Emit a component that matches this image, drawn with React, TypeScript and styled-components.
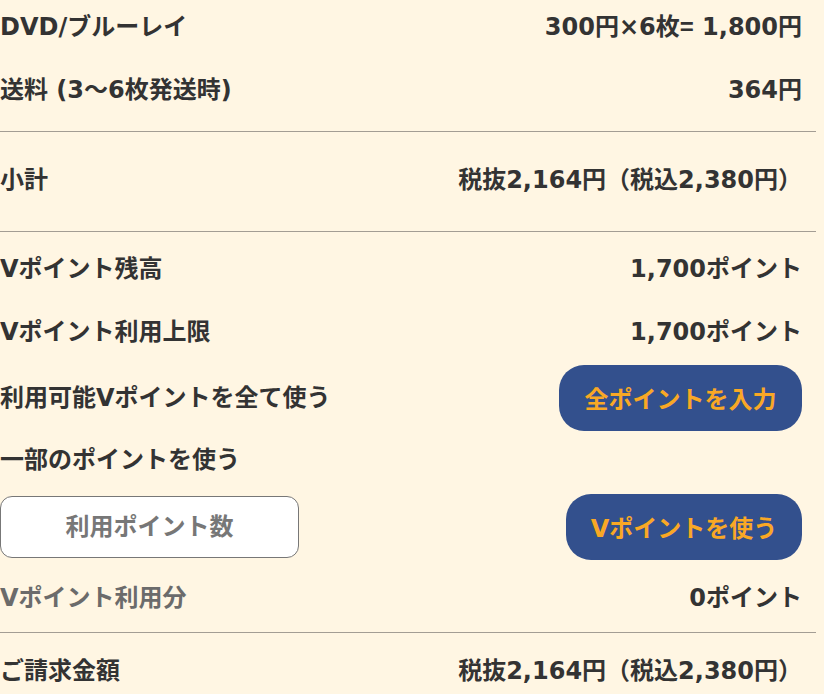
import styled, { createGlobalStyle } from "styled-components";

const GlobalStyle = createGlobalStyle`
  html, body {
    margin: 0;
    padding: 0;
    background: #fff6e3;
  }
  body {
    font-family: "DejaVu Sans", "Noto Sans CJK JP", sans-serif;
    color: #333333;
  }
`;

const Wrapper = styled.div`
  width: 816px;
  background: #fff6e3;
`;

const Section = styled.section<{ $pt: number; $pb: number; $line?: boolean }>`
  display: flex;
  flex-direction: column;
  padding: ${(p) => p.$pt}px 0 ${(p) => p.$pb}px 0;
  border-bottom: ${(p) => (p.$line ? "1px solid #a39d94" : "none")};
`;

const Row = styled.div<{ $mt?: number }>`
  display: flex;
  align-items: center;
  justify-content: space-between;
  margin-top: ${(p) => p.$mt ?? 0}px;
  padding-right: 14px;
  min-height: 32px;
`;

const Label = styled.span<{ $muted?: boolean }>`
  font-size: 24px;
  font-weight: 700;
  line-height: 32px;
  white-space: nowrap;
  color: ${(p) => (p.$muted ? "#6b6b6b" : "#333333")};
`;

const Value = styled.span`
  font-size: 24px;
  font-weight: 700;
  line-height: 32px;
  white-space: nowrap;
  color: #333333;
  text-align: right;
`;

// narrower "=" glyph, as in the reference
const Op = styled.span`
  font-family: "Liberation Sans", "Noto Sans CJK JP", sans-serif;
`;

const PointButton = styled.button<{ $width: number }>`
  width: ${(p) => p.$width}px;
  height: 66px;
  padding: 0 0 2px 0;
  border: none;
  border-radius: 25px;
  background: #33508d;
  color: #f9a825;
  font-family: inherit;
  font-size: 24px;
  font-weight: 700;
  cursor: pointer;
`;

const PointInput = styled.input`
  box-sizing: border-box;
  width: 299px;
  height: 62px;
  border: 1px solid #777777;
  border-radius: 12px;
  background: #ffffff;
  font-family: inherit;
  font-size: 24px;
  font-weight: 700;
  text-align: center;
  color: #333333;

  &::placeholder {
    color: #777777;
  }
`;

export default function App() {
  return (
    <>
      <GlobalStyle />
      <Wrapper>
        <Section $pt={11} $pb={25} $line>
          <Row>
            <Label>DVD/ブルーレイ</Label>
            <Value>
              300円×6枚<Op>=</Op> 1,800円
            </Value>
          </Row>
          <Row $mt={31}>
            <Label>送料 (3〜6枚発送時)</Label>
            <Value>364円</Value>
          </Row>
        </Section>

        <Section $pt={32} $pb={35} $line>
          <Row>
            <Label>小計</Label>
            <Value>税抜2,164円（税込2,380円）</Value>
          </Row>
        </Section>

        <Section $pt={21} $pb={18} $line>
          <Row>
            <Label>Vポイント残高</Label>
            <Value>1,700ポイント</Value>
          </Row>
          <Row $mt={31}>
            <Label>Vポイント利用上限</Label>
            <Value>1,700ポイント</Value>
          </Row>
          <Row $mt={17}>
            <Label>利用可能Vポイントを全て使う</Label>
            <PointButton $width={243}>全ポイントを入力</PointButton>
          </Row>
          <Row $mt={13}>
            <Label>一部のポイントを使う</Label>
          </Row>
          <Row $mt={18}>
            <PointInput placeholder="利用ポイント数" />
            <PointButton $width={236}>Vポイントを使う</PointButton>
          </Row>
          <Row $mt={22}>
            <Label $muted>Vポイント利用分</Label>
            <Value>0ポイント</Value>
          </Row>
        </Section>

        <Section $pt={22} $pb={20}>
          <Row>
            <Label>ご請求金額</Label>
            <Value>税抜2,164円（税込2,380円）</Value>
          </Row>
        </Section>
      </Wrapper>
    </>
  );
}
